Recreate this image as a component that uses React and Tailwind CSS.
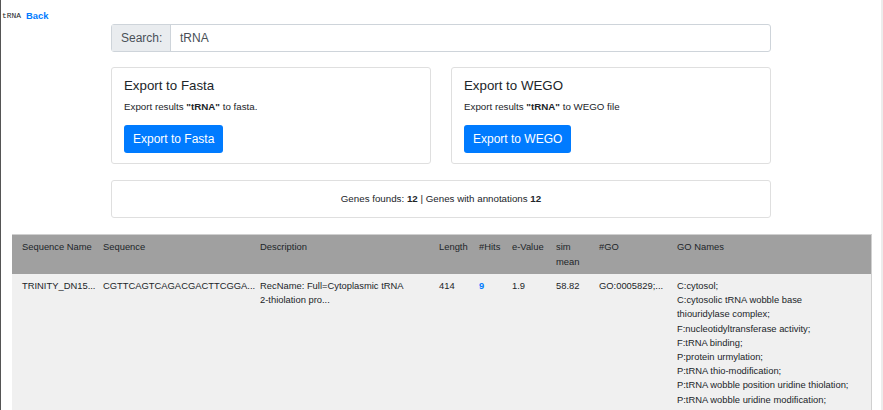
const goNames = [
  "C:cytosol;",
  "C:cytosolic tRNA wobble base",
  "thiouridylase complex;",
  "F:nucleotidyltransferase activity;",
  "F:tRNA binding;",
  "P:protein urmylation;",
  "P:tRNA thio-modification;",
  "P:tRNA wobble position uridine thiolation;",
  "P:tRNA wobble uridine modification;",
];

const columns = [
  { label: "Sequence Name", width: "w-[81px]" },
  { label: "Sequence", width: "w-[157px]" },
  { label: "Description", width: "w-[179px]" },
  { label: "Length", width: "w-[40px]" },
  { label: "#Hits", width: "w-[33px]" },
  { label: "e-Value", width: "w-[44px]" },
  { label: "sim mean", width: "w-[43px]" },
  { label: "#GO", width: "w-[78px]" },
  { label: "GO Names", width: "w-[204px]" },
];

const cellClass = "pl-[10px] pr-0 align-top";

function ExportCard({ title, query, suffix, button }) {
  return (
    <div className="flex-1 rounded-[3px] border border-[#dfdfdf] bg-white pl-[12px] pr-[12px] pt-[11px] pb-[10px]">
      <h5 className="text-[13.3px] leading-[14px] text-[#212529]">{title}</h5>
      <p className="mt-[7px] text-[9.75px] leading-[14.6px] text-[#212529]">
        Export results <strong>"{query}"</strong> {suffix}
      </p>
      <button
        type="button"
        className="mt-[10.4px] h-[28px] rounded-[3px] bg-[#007bff] px-[9px] text-[12px] leading-[28px] text-white"
      >
        {button}
      </button>
    </div>
  );
}

export default function App() {
  return (
    <div
      className="min-h-screen w-full border-l border-r-2 border-l-[#555555] border-r-[#ececec] bg-white text-[#212529]"
      style={{ fontFamily: '"Liberation Sans", Arial, sans-serif' }}
    >
      <div className="flex h-[22px] items-start gap-[5px] pl-[1px] pt-[10px] leading-[12px]">
        <span className="font-['Liberation_Mono',monospace] text-[7.9px]">tRNA</span>
        <a href="#" className="text-[9.4px] font-bold text-[#007bff]">
          Back
        </a>
      </div>

      <div className="mx-auto w-[660px]">
        <div className="mt-[2px] flex h-[28px] rounded-[3px] border border-[#ced4da] text-[12px] text-[#495057]">
          <div className="flex w-[59px] items-center border-r border-[#ced4da] bg-[#e9ecef] pl-[9px]">
            Search:
          </div>
          <div className="flex flex-1 items-center pl-[9px]">tRNA</div>
        </div>

        <div className="mt-[15px] flex gap-[20px]">
          <ExportCard
            title="Export to Fasta"
            query="tRNA"
            suffix="to fasta."
            button="Export to Fasta"
          />
          <ExportCard
            title="Export to WEGO"
            query="tRNA"
            suffix="to WEGO file"
            button="Export to WEGO"
          />
        </div>

        <div className="mt-[16px] flex h-[38px] items-center justify-center rounded-[3px] border border-[#dfdfdf] text-[9.75px]">
          <span>
            Genes founds: <strong>12</strong> | Genes with annotations <strong>12</strong>
          </span>
        </div>
      </div>

      <div className="ml-[11px] mr-[10px] mt-[16px]">
        <table className="w-full table-fixed border-collapse border-r border-t border-[#d0d0d0] text-[9.4px] leading-[14.2px]">
          <colgroup>
            {columns.map((col) => (
              <col key={col.label} className={col.width} />
            ))}
          </colgroup>
          <thead>
            <tr className="bg-[#a0a0a0] text-left">
              {columns.map((col) => (
                <th
                  key={col.label}
                  className={`${cellClass} whitespace-nowrap pt-[5.5px] pb-[5px] font-normal`}
                >
                  {col.label === "sim mean" ? (
                    <>
                      sim
                      <br />
                      mean
                    </>
                  ) : (
                    col.label
                  )}
                </th>
              ))}
            </tr>
          </thead>
          <tbody>
            <tr className="bg-[#f0f0f0]">
              <td className={`${cellClass} whitespace-nowrap pt-[5px] pb-[8px]`}>TRINITY_DN15...</td>
              <td className={`${cellClass} whitespace-nowrap pt-[5px]`}>CGTTCAGTCAGACGACTTCGGA...</td>
              <td className={`${cellClass} pt-[5px]`}>
                RecName: Full=Cytoplasmic tRNA
                <br />
                2-thiolation pro...
              </td>
              <td className={`${cellClass} pt-[5px]`}>414</td>
              <td className={`${cellClass} pt-[5px]`}>
                <a href="#" className="font-bold text-[#007bff]">
                  9
                </a>
              </td>
              <td className={`${cellClass} pt-[5px]`}>1.9</td>
              <td className={`${cellClass} pt-[5px]`}>58.82</td>
              <td className={`${cellClass} whitespace-nowrap pt-[5px]`}>GO:0005829;...</td>
              <td className={`${cellClass} whitespace-nowrap pt-[5px] pb-[8px]`}>
                {goNames.map((name) => (
                  <div key={name}>{name}</div>
                ))}
              </td>
            </tr>
          </tbody>
        </table>
      </div>
    </div>
  );
}
